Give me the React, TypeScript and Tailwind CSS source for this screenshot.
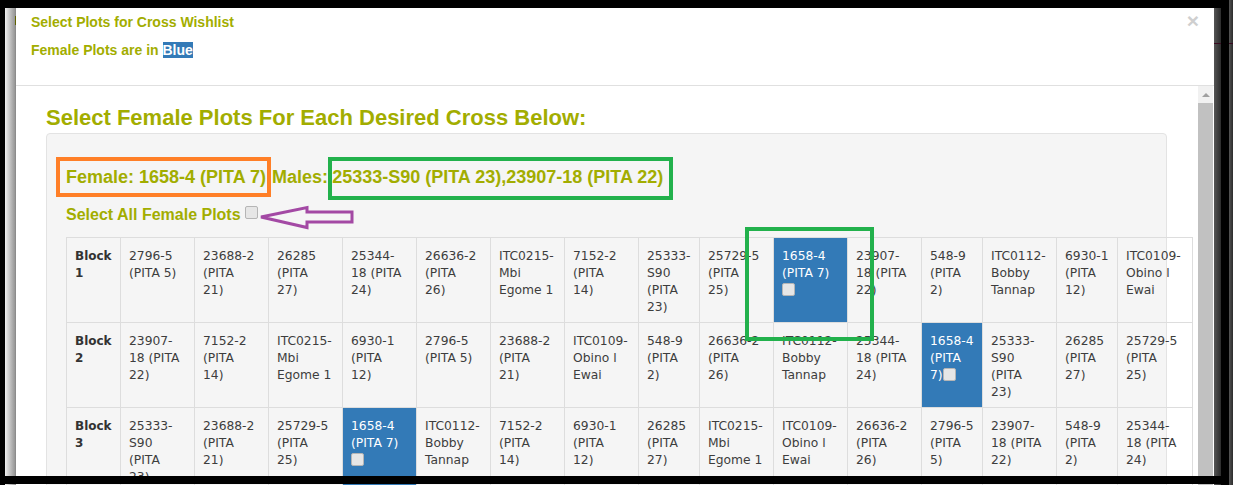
const colClasses = [
  "w-[54px]", "w-[74px]", "w-[74px]", "w-[74px]", "w-[74px]", "w-[74px]", "w-[74px]", "w-[74px]",
  "w-[61px]", "w-[74px]", "w-[74px]", "w-[74px]", "w-[61px]", "w-[74px]", "w-[61px]", "w-[75px]",
];

// line breaks are kept as they fall in the picture
const rows = [
  {
    name: "Block\n1",
    plots: [
      "2796-5\n(PITA 5)", "23688-2\n(PITA\n21)", "26285\n(PITA\n27)", "25344-\n18 (PITA\n24)", "26636-2\n(PITA\n26)",
      "ITC0215-\nMbi\nEgome 1", "7152-2\n(PITA\n14)", "25333-\nS90\n(PITA\n23)", "25729-5\n(PITA\n25)", "1658-4\n(PITA 7)\n",
      "23907-\n18 (PITA\n22)", "548-9\n(PITA\n2)", "ITC0112-\nBobby\nTannap", "6930-1\n(PITA\n12)", "ITC0109-\nObino l\nEwai",
    ],
  },
  {
    name: "Block\n2",
    plots: [
      "23907-\n18 (PITA\n22)", "7152-2\n(PITA\n14)", "ITC0215-\nMbi\nEgome 1", "6930-1\n(PITA\n12)", "2796-5\n(PITA 5)",
      "23688-2\n(PITA\n21)", "ITC0109-\nObino l\nEwai", "548-9\n(PITA\n2)", "26636-2\n(PITA\n26)", "ITC0112-\nBobby\nTannap",
      "25344-\n18 (PITA\n24)", "1658-4\n(PITA\n7)", "25333-\nS90\n(PITA\n23)", "26285\n(PITA\n27)", "25729-5\n(PITA\n25)",
    ],
  },
  {
    name: "Block\n3",
    plots: [
      "25333-\nS90\n(PITA\n23)", "23688-2\n(PITA\n21)", "25729-5\n(PITA\n25)", "1658-4\n(PITA 7)\n", "ITC0112-\nBobby\nTannap",
      "7152-2\n(PITA\n14)", "6930-1\n(PITA\n12)", "26285\n(PITA\n27)", "ITC0215-\nMbi\nEgome 1", "ITC0109-\nObino l\nEwai",
      "26636-2\n(PITA\n26)", "2796-5\n(PITA\n5)", "23907-\n18 (PITA\n22)", "548-9\n(PITA\n2)", "25344-\n18 (PITA\n24)",
    ],
  },
];

function FakeCheck({ className }: { className: string }) {
  return (
    <span
      className={"inline-block w-[13px] h-[13px] rounded-[2px] border border-[#b5b5b5] bg-[#e6e6e6] " + className}
    />
  );
}

function Plot({ text }: { text: string }) {
  if (text.startsWith("1658-4")) {
    return (
      <td className="border border-[#ddd] bg-[#337ab7] text-white px-2 pt-[10px] pb-0 align-top h-[85px] leading-[17px] whitespace-pre">
        {text}
        <FakeCheck className="align-[-2px]" />
      </td>
    );
  }
  return (
    <td className="border border-[#ddd] px-2 pt-[10px] pb-0 align-top h-[85px] leading-[17px] whitespace-pre">{text}</td>
  );
}

function SideStrip({ className }: { className: string }) {
  return (
    <div className={"flex flex-col " + className}>
      <div className="flex-1 bg-linear-to-r from-[#555] to-[#2c2c2c]" />
      <div className="h-[1px] bg-[#3a0a20]" />
      <div className="h-[441px] bg-linear-to-r from-[#555] to-[#2c2c2c]" />
    </div>
  );
}

export default function App() {
  return (
    <div className="relative w-[1233px] h-[485px] overflow-hidden bg-black flex font-['Liberation_Sans',sans-serif]">
      <div className="w-[5px] shrink-0 bg-black" />
      <div className="w-[10px] shrink-0 mt-[8px] bg-linear-to-r from-[#f0f0f0] to-[#969696]" />
      <div className="w-[1px] shrink-0 mt-[8px] bg-[#8c8c8c]" />

      <div className="w-[1198px] shrink-0 mt-[8px] bg-white flex flex-col overflow-hidden">
        <div className="h-[78px] shrink-0 border-b border-[#e0e0e0] px-[15px] relative text-[#a2ad00] font-bold text-[14px]">
          <div className="pt-[6px] leading-[17px]">Select Plots for Cross Wishlist</div>
          <div className="mt-[11px] leading-[17px]">
            Female Plots are in <span className="bg-[#337ab7] text-white">Blue</span>
          </div>
          <span className="absolute right-[15px] top-[2px] text-[#cfcfcf] text-[21px] leading-[21px]">×</span>
        </div>
        <div className="flex flex-1 min-h-0">
          <div className="flex-1 min-w-0 pl-[30px] overflow-hidden">
            <h1 className="mt-[19px] text-[#a2ad00] font-bold text-[22px] leading-[26px]">
              Select Female Plots For Each Desired Cross Below:
            </h1>
            <div className="mt-[2px] h-[400px] w-[1121px] bg-[#f5f5f5] border border-[#e3e3e3] rounded-[4px] pl-[19px] pt-[31px]">
              <div className="text-[#a2ad00] font-bold text-[18px] leading-[24px] whitespace-nowrap">
                Female: 1658-4 (PITA 7) <span className="ml-[1px]">Males:</span>{" "}
                <span className="-ml-[1px]">25333-S90 (PITA 23),23907-18 (PITA 22)</span>
              </div>
              <div className="mt-[16px] text-[#a2ad00] font-bold text-[16px] leading-[20px] whitespace-nowrap">
                Select All Female Plots <FakeCheck className="align-[1px]" />
              </div>
              <table className="mt-[12px] table-fixed border-collapse w-[1126px] text-[12.3px] text-[#3d3d3d] font-['DejaVu_Sans',sans-serif]">
                <colgroup>
                  {colClasses.map((c, i) => (
                    <col key={i} className={c} />
                  ))}
                </colgroup>
                <tbody>
                  {rows.map((row) => (
                    <tr key={row.name}>
                      <td className="border border-[#ddd] px-2 pt-[10px] pb-0 align-top h-[85px] leading-[17px] font-bold text-[12px] text-[#333] whitespace-pre">
                        {row.name}
                      </td>
                      {row.plots.map((plot, i) => (
                        <Plot key={i} text={plot} />
                      ))}
                    </tr>
                  ))}
                </tbody>
              </table>
            </div>
          </div>
          <div className="w-[15px] shrink-0 mr-[1px] bg-[#f1f1f1] flex flex-col">
            <div className="h-[17px] flex items-center justify-center">
              <span className="w-0 h-0 border-x-[4px] border-x-transparent border-b-[4px] border-b-[#a0a0a0]" />
            </div>
            <div className="flex-1 bg-[#c1c1c1]" />
          </div>
        </div>
      </div>

      <SideStrip className="w-[7px] shrink-0 mt-[8px]" />
      <div className="w-[8px] shrink-0 bg-black" />
      <SideStrip className="w-[4px] shrink-0" />

      {/* black frame edges and annotations drawn on top of the screenshot */}
      <div className="absolute left-0 top-[476px] w-[1229px] h-[8px] bg-black" />
      <div className="absolute left-[15px] top-[16px] w-[1px] h-[9px] bg-[#5f6200]" />
      <div className="absolute left-[56px] top-[157px] w-[215px] h-[40px] border-4 border-[#ff7f27]" />
      <div className="absolute left-[328px] top-[157px] w-[345px] h-[43px] border-4 border-[#22b14c]" />
      <div className="absolute left-[745px] top-[227px] w-[129px] h-[114px] border-4 border-[#22b14c]" />
      <svg className="absolute left-[255px] top-[203px]" width="102" height="30" viewBox="255 203 102 30" fill="none">
        <path d="M261 217 L307 207.5 V212 H352 V222 H307 V227.5 Z" stroke="#a349a4" strokeWidth="3" />
      </svg>
    </div>
  );
}
